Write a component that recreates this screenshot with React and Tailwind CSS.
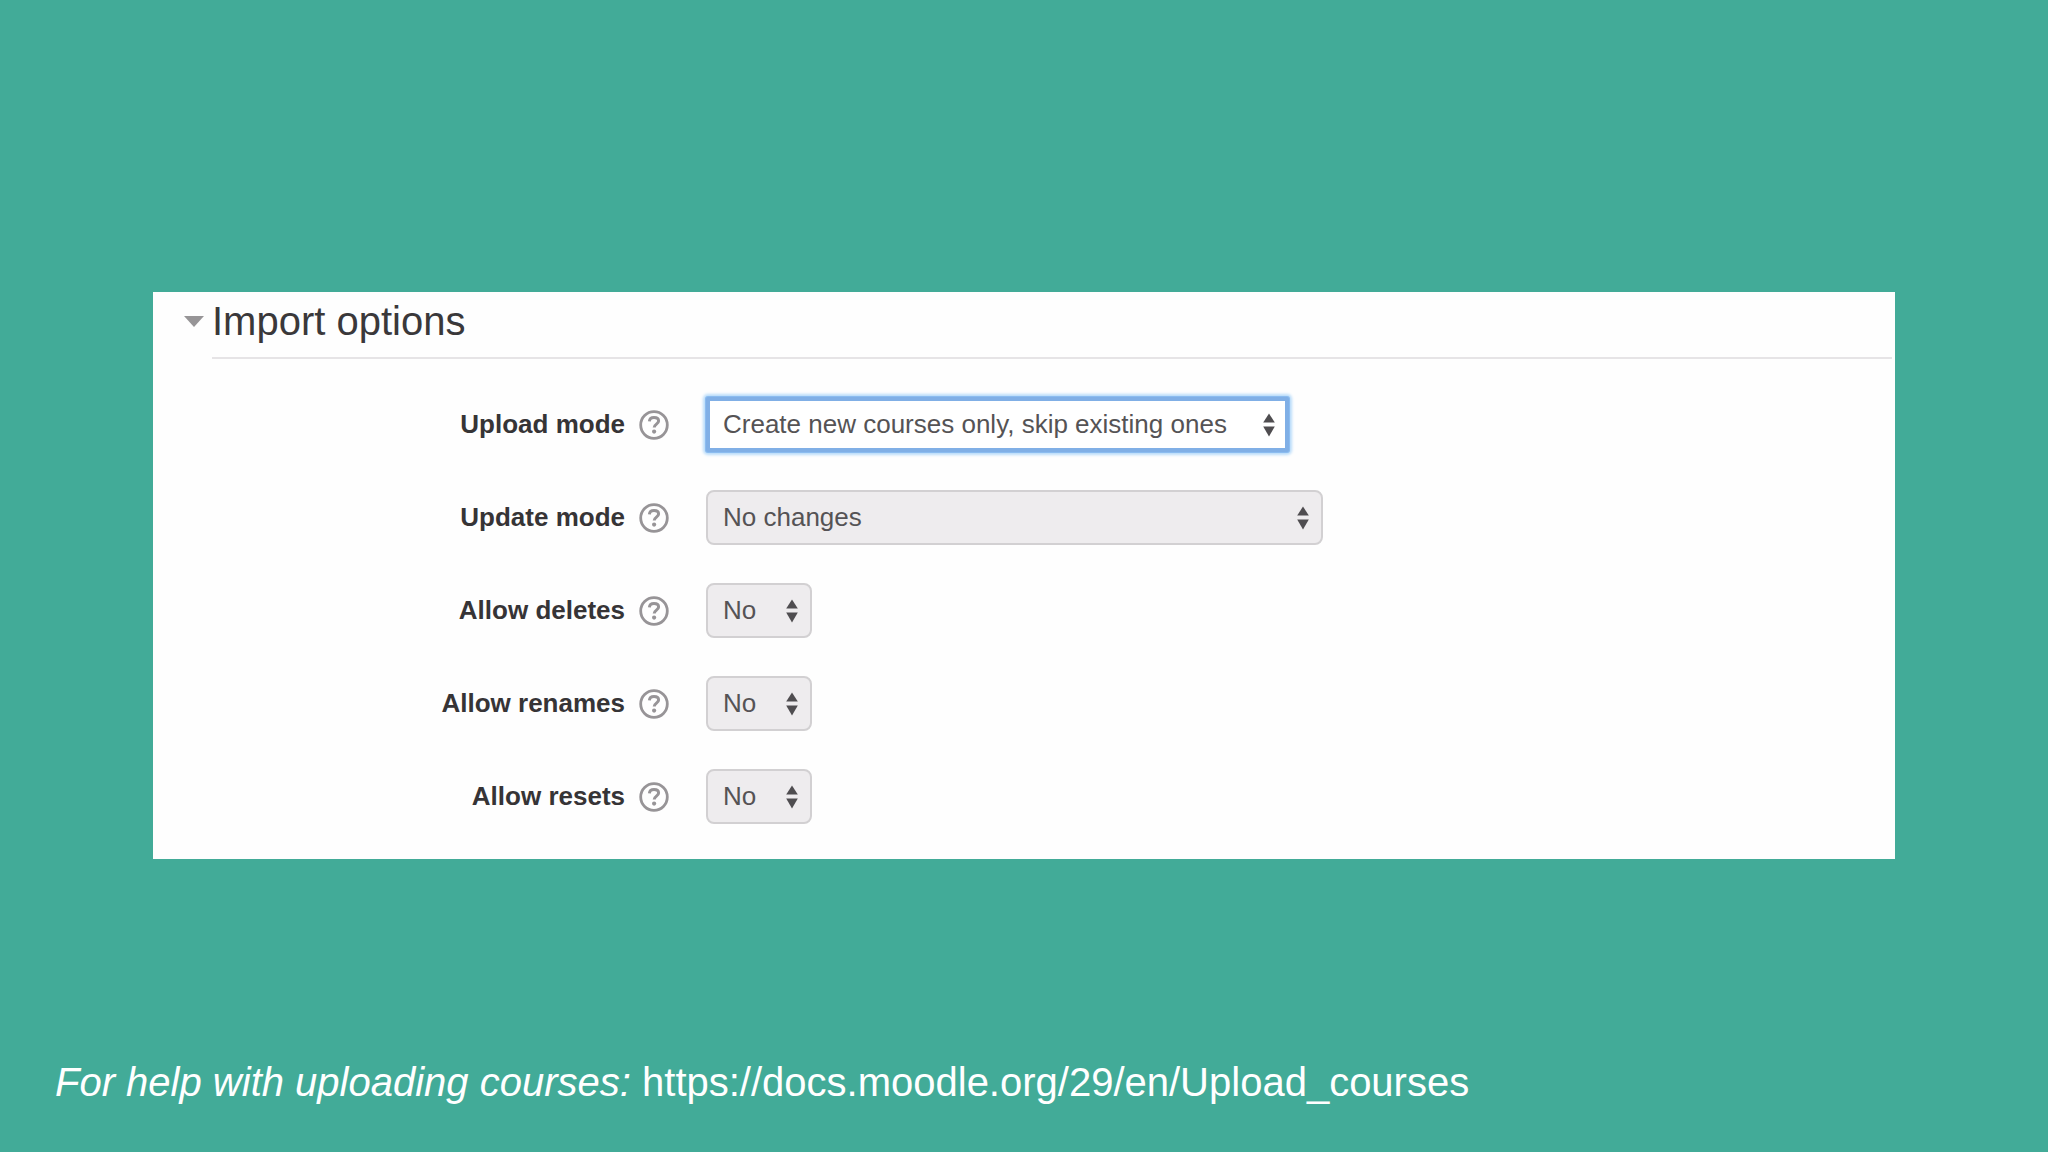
import React, { useState } from 'react';

const fields = [
  {
    id: 'upload-mode',
    label: 'Upload mode',
    width: 'w-[583px]',
    active: true,
    options: ['Create new courses only, skip existing ones'],
  },
  {
    id: 'update-mode',
    label: 'Update mode',
    width: 'w-[617px]',
    options: ['No changes'],
  },
  { id: 'allow-deletes', label: 'Allow deletes', width: 'w-[106px]', options: ['No', 'Yes'] },
  { id: 'allow-renames', label: 'Allow renames', width: 'w-[106px]', options: ['No', 'Yes'] },
  { id: 'allow-resets', label: 'Allow resets', width: 'w-[106px]', options: ['No', 'Yes'] },
];

const HelpIcon = () => (
  <svg viewBox="0 0 30 30" className="size-[30px]" fill="none" stroke="#979497" aria-hidden="true">
    <circle cx="15" cy="15" r="13.3" strokeWidth="2.8" />
    <path d="M10.4 11.4c.2-2.5 2-3.8 4.6-3.8s4.6 1.3 4.6 3.4c0 3-4.4 3.2-4.4 6.4" strokeWidth="3" />
    <circle cx="15.1" cy="21.6" r="2.1" fill="#979497" stroke="none" />
  </svg>
);

const UpDownArrows = () => (
  <svg
    viewBox="0 0 12 24"
    className="pointer-events-none absolute right-3.5 top-1/2 h-6 w-3 -translate-y-1/2"
    fill="#4f4d50"
    aria-hidden="true"
  >
    <path d="M6 0.5 11.8 9.5H0.2z" />
    <path d="M6 23.5 11.8 13.5H0.2z" />
  </svg>
);

const FieldRow = ({ field }) => (
  <div className="flex items-center">
    <div className="flex w-[516px] shrink-0 items-center justify-end gap-3.5">
      <label htmlFor={field.id} className="text-[26px] font-bold text-[#363436]">
        {field.label}
      </label>
      <button type="button" aria-label={`Help with ${field.label}`}>
        <HelpIcon />
      </button>
    </div>
    <div className={`relative ml-[37px] ${field.width}`}>
      <select
        id={field.id}
        className={
          field.active
            ? 'block h-[55px] w-full appearance-none rounded-xs border-4 border-[#80afe6] bg-white pl-[13px] text-[26px] text-[#555355] shadow-[0_0_0_1px_#8bbcf0,0_0_3px_3px_#b9dcfa] outline-none'
            : 'block h-[55px] w-full appearance-none rounded-lg border-2 border-[#d2d0d2] bg-[#eeecee] pl-[15px] text-[26px] text-[#555355]'
        }
      >
        {field.options.map((option) => (
          <option key={option}>{option}</option>
        ))}
      </select>
      <UpDownArrows />
    </div>
  </div>
);

const App = () => {
  const [open, setOpen] = useState(true);

  return (
    <div className="flex min-h-screen flex-col bg-[#42ab98] pt-[292px] font-['Liberation_Sans',Arial,sans-serif]">
      <main className="mx-[153px] bg-[#fefefe]">
        <div className="pl-[31px] pr-[3px]">
          <h2 className="text-[40px] leading-[58px] text-[#3a383a]">
            <button
              type="button"
              aria-expanded={open}
              onClick={() => setOpen(!open)}
              className="flex items-center gap-2"
            >
              <svg viewBox="0 0 20 11" className="h-[11px] w-5" fill="#979597" aria-hidden="true">
                <path d="M0 0h20L10 11z" />
              </svg>
              Import options
            </button>
          </h2>
          <div className="ml-7 mt-[7px] h-0.5 bg-[#e6e4e6]" />
        </div>
        {open && (
          <form className="flex flex-col gap-[38px] pb-[35px] pt-[38px]">
            {fields.map((field) => (
              <FieldRow key={field.id} field={field} />
            ))}
          </form>
        )}
      </main>

      <footer className="mt-auto px-[55px] pb-[46px] text-[40px] leading-[48px] text-white">
        <em>For help with uploading courses:</em>{' '}
        <a href="https://docs.moodle.org/29/en/Upload_courses">
          https://docs.moodle.org/29/en/Upload_courses
        </a>
      </footer>
    </div>
  );
};

export default App;
